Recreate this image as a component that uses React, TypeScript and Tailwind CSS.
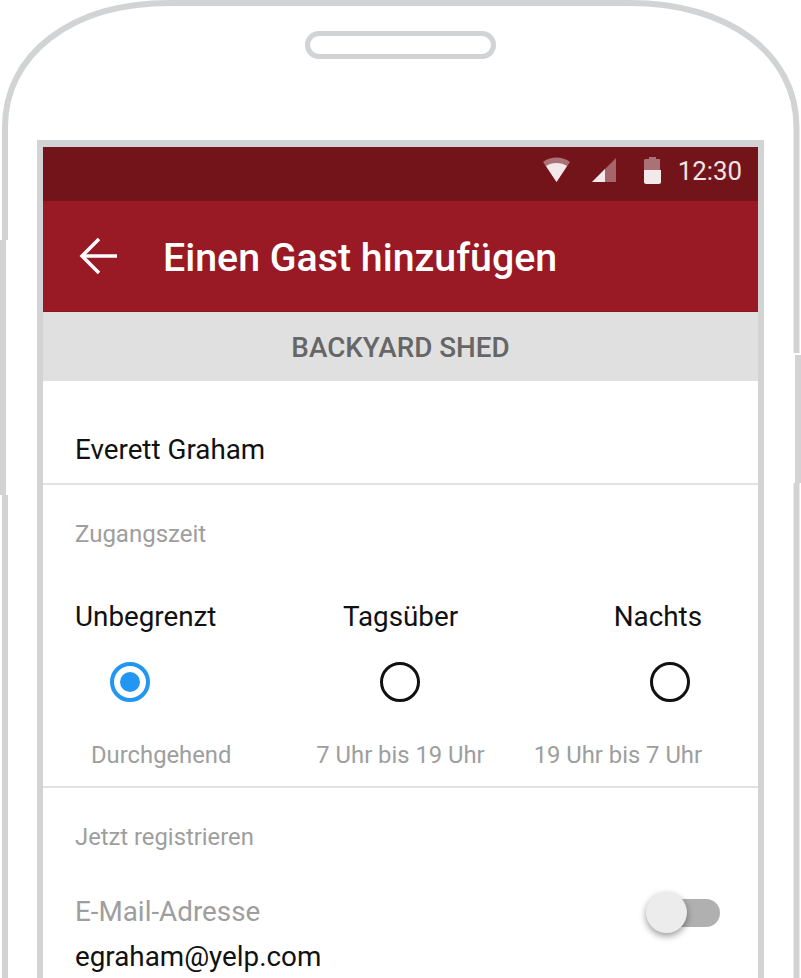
import React from "react";

function PhoneOutline() {
  return (
    <svg className="absolute left-0 top-0" width="801" height="978" viewBox="0 0 801 978" fill="none">
      <path
        d="M5 240V127C5 55 70 3 170 3H630C730 3 796.500 55 796.500 127V353"
        stroke="#d1d3d4"
        strokeWidth="6"
      />
      <path d="M3 240V495" stroke="#d1d3d4" strokeWidth="6" />
      <path d="M5 495V978" stroke="#d1d3d4" strokeWidth="6" />
      <path d="M798 355V483" stroke="#d1d3d4" strokeWidth="6" />
      <path d="M796.500 483V978" stroke="#d1d3d4" strokeWidth="6" />
    </svg>
  );
}

function StatusIcons() {
  return (
    <svg width="76" height="27" viewBox="0 0 76 27" fill="none">
      {/* wifi */}
      <path d="M0 5C7 -1 20 -1 27 5L13.500 25Z" fill="#fff" fillOpacity="0.4" />
      <path d="M3 9C9 5 18 5 24 9L13.500 25Z" fill="#f3e9ea" />
      {/* signal */}
      <path d="M49 25L73 1V25Z" fill="#fff" fillOpacity="0.35" />
      <path d="M49 25L62 12V25Z" fill="#f3e9ea" />
    </svg>
  );
}

function Battery() {
  return (
    <svg width="17" height="27" viewBox="0 0 17 27" fill="none">
      <path d="M5 2H12V0H5Z" fill="#fff" fillOpacity="0.4" />
      <path d="M1 2H16V13H0V3Z" fill="#fff" fillOpacity="0.4" />
      <path d="M0 13H17V25C17 26 16 27 15 27H2C1 27 0 26 0 25Z" fill="#f3e9ea" />
    </svg>
  );
}

function Radio({ on }: { on?: boolean }) {
  if (on) {
    return (
      <div className="flex h-10 w-10 items-center justify-center rounded-full border-[4px] border-[#2196f3]">
        <div className="h-5 w-5 rounded-full bg-[#2196f3]" />
      </div>
    );
  }
  return <div className="h-10 w-10 rounded-full border-[3px] border-[#111]" />;
}

export default function App() {
  return (
    <div className="relative h-[978px] w-[801px] overflow-hidden bg-white font-['Roboto',sans-serif]">
      <PhoneOutline />
      <div className="relative ml-[305px] mt-[31px] h-[28px] w-[191px] rounded-full border-[5px] border-[#d1d3d4]" />

      <div className="relative ml-[37px] mt-[81px] h-[840px] w-[727px] border-x-[6px] border-t-[7px] border-[#d1d3d4]">
        {/* status bar */}
        <div className="flex h-[54px] items-center justify-end bg-[#73141b] pr-[16px] text-[25.800px] text-[#f0e4e5]">
          <div className="mb-[7px] mr-[25px] flex items-center">
            <StatusIcons />
          </div>
          <div className="mb-[8px] mr-[17px] flex items-center">
            <Battery />
          </div>
          <span className="mb-[5px] leading-none">12:30</span>
        </div>

        {/* app bar */}
        <div className="flex h-[111px] items-center border-b border-[#8a1520] bg-[#991925] pl-[36px]">
          <svg width="38" height="38" viewBox="0 0 38 38" fill="none" stroke="#fff" strokeWidth="3.500">
            <path d="M38 19H3" />
            <path d="M20 2L3 19L20 36" />
          </svg>
          <h1 className="ml-[46px] mt-[4px] text-[39.300px] font-medium text-white">Einen Gast hinzufügen</h1>
        </div>

        {/* property */}
        <div className="flex h-[69px] items-center justify-center bg-[#e0e0e0] pt-[2px] text-[27.800px] font-medium text-[#666]">
          BACKYARD SHED
        </div>

        <div className="bg-white">
          <div className="flex h-[104px] items-end border-b-2 border-[#e2e2e2] pb-[12px] pl-[32px] text-[27.800px] text-[#111]">
            Everett Graham
          </div>

          <div className="border-b-2 border-[#e2e2e2] px-[32px]">
            <p className="pt-[34px] text-[24px] leading-[30px] text-[#9e9e9e]">Zugangszeit</p>
            <div className="mt-[52px] grid grid-cols-3 text-[27.800px] leading-[32px] text-[#111]">
              <span>Unbegrenzt</span>
              <span className="text-center">Tagsüber</span>
              <span className="pr-[24px] text-right">Nachts</span>
            </div>
            <div className="mt-[29px] grid grid-cols-3">
              <div className="pl-[35px]">
                <Radio on />
              </div>
              <div className="flex justify-center pr-[1px]">
                <Radio />
              </div>
              <div className="flex justify-end pr-[36px]">
                <Radio />
              </div>
            </div>
            <div className="mt-[38px] grid grid-cols-3 pb-[16px] text-[23.800px] leading-[30px] text-[#9e9e9e]">
              <span className="pl-[16px]">Durchgehend</span>
              <span className="text-center">7 Uhr bis 19 Uhr</span>
              <span className="pr-[24px] text-right">19 Uhr bis 7 Uhr</span>
            </div>
          </div>

          <div className="px-[32px]">
            <p className="pt-[34px] text-[23.800px] leading-[30px] text-[#9e9e9e]">Jetzt registrieren</p>
            <div className="mt-[44px] flex items-start justify-between">
              <div>
                <p className="text-[27.800px] leading-[32px] text-[#9e9e9e]">E-Mail-Adresse</p>
                <p className="mt-[13px] text-[27.800px] leading-[32px] text-[#111]">egraham@yelp.com</p>
              </div>
              <div className="relative mr-[6px] mt-[3px] h-[28px] w-[60px] rounded-full bg-[#b0b0b0]">
                <div className="absolute left-[-14px] top-[-7px] h-[41px] w-[41px] rounded-full bg-[#ececec] shadow-[0_3px_7px_rgba(0,0,0,0.4)]" />
              </div>
            </div>
          </div>
        </div>
      </div>
    </div>
  );
}
